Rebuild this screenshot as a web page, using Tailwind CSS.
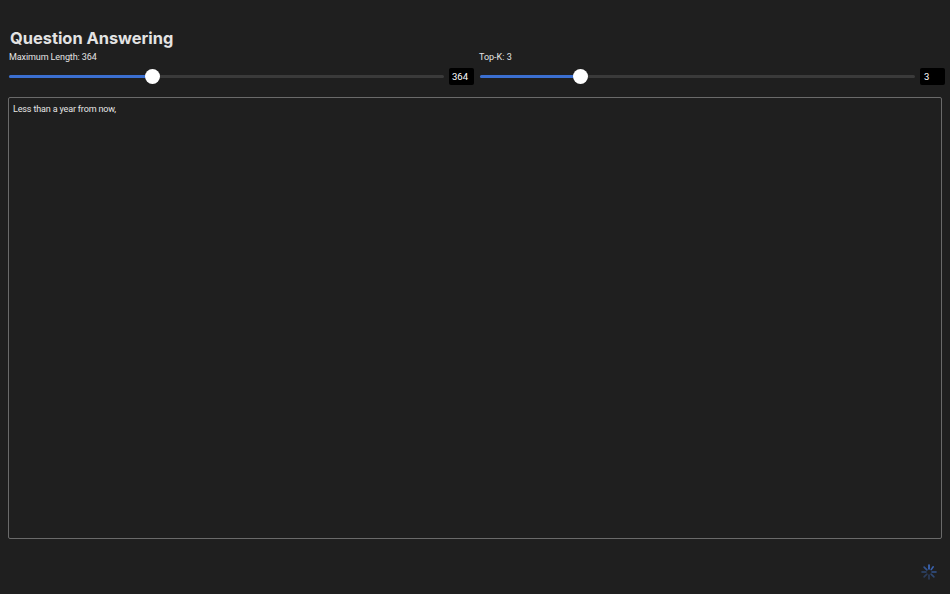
<!DOCTYPE html>
<html lang="en">
<head>
  <meta charset="UTF-8">
  <meta name="viewport" content="width=device-width, initial-scale=1.0">
  <title>Question Answering</title>
  <script src="https://cdn.jsdelivr.net/npm/@tailwindcss/browser@4"></script>
</head>
<body class="bg-[#1f1f1f] text-[#e3e3e3] h-[594px] overflow-hidden font-['Roboto','Liberation_Sans',sans-serif]">
  <div class="flex flex-col h-full pl-[9px] pr-[5px]">
    <h1 class="pt-[28px] pb-px pl-px text-[16.4px] leading-[20px] font-bold font-['Inter','Liberation_Sans',sans-serif]">Question Answering</h1>

    <!-- sliders -->
    <div class="flex gap-[6px] mt-[2px] h-[43px]">
      <div class="w-[465px]">
        <p class="text-[9px] leading-[11px] mt-[1px] tracking-[-0.1px]">Maximum Length: 364</p>
        <div class="flex items-center gap-[5px] mt-[5px]">
          <div class="relative w-[435px] h-[3px] rounded-full bg-[#3a3a3a]">
            <div class="h-full w-[143px] rounded-full bg-[#3b6fd0]"></div>
            <div class="absolute left-[136px] top-[-6px] size-[15px] rounded-full bg-white"></div>
          </div>
          <div class="w-[25px] h-[17px] pl-[3px] rounded-[2px] bg-black text-white text-[9.5px] leading-[17px]">364</div>
        </div>
      </div>
      <div class="w-[465px]">
        <p class="text-[9px] leading-[11px] mt-[1px] -ml-px">Top-K: 3</p>
        <div class="flex items-center gap-[5px] mt-[5px]">
          <div class="relative w-[435px] h-[3px] rounded-full bg-[#3a3a3a]">
            <div class="h-full w-[100px] rounded-full bg-[#3b6fd0]"></div>
            <div class="absolute left-[93px] top-[-6px] size-[15px] rounded-full bg-white"></div>
          </div>
          <div class="w-[25px] h-[17px] pl-[4px] rounded-[2px] bg-black text-white text-[9.5px] leading-[17px]">3</div>
        </div>
      </div>
    </div>

    <!-- output -->
    <div class="w-[934px] h-[442px] -ml-px mt-[3px] border border-[#6a6a6a] rounded-[2px] px-[4px] py-[6px] text-[9px] leading-[11px] tracking-[-0.15px] text-[#e6e6e6]">Less than a year from now,</div>

    <div class="flex justify-end pr-[8px] mt-[25px]">
      <svg class="size-[16px]" viewBox="0 0 16 16" fill="none" stroke-width="1.6" stroke-linecap="round">
        <path stroke="#3f6fc8" d="M8 1v4"/>
        <path stroke="#3a62ae" d="M12.2 2.8l-2 2.8"/>
        <path stroke="#33548f" d="M15 8h-4"/>
        <path stroke="#2f4872" d="M12.9 12.9l-2.8-2.8"/>
        <path stroke="#2c3d5c" d="M8 15v-4"/>
        <path stroke="#2c3d5c" d="M3.1 12.9l2.8-2.8"/>
        <path stroke="#2f4872" d="M1 8h4"/>
        <path stroke="#33548f" d="M3.1 3.1l2.8 2.8"/>
      </svg>
    </div>
  </div>
</body>
</html>
